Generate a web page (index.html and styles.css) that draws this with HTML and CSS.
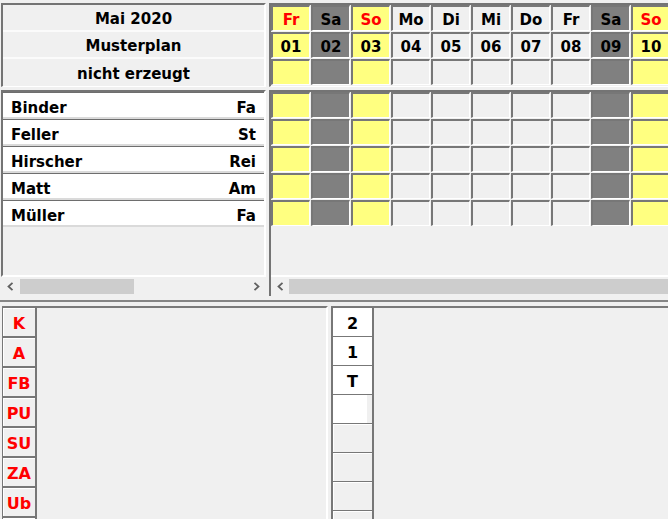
FILE: index.html
```html
<!DOCTYPE html>
<html lang="de">
<head>
<meta charset="utf-8">
<title>Dienstplan Mai 2020</title>
<link rel="stylesheet" href="styles.css">
</head>
<body>
<div class="top">
  <div class="col-left">
    <div class="hdr-left">
      <div class="hl-row">Mai 2020</div>
      <div class="hl-row">Musterplan</div>
      <div class="hl-row">nicht erzeugt</div>
    </div>
    <div class="names">
      <div class="names-client">
        <div class="name-row"><span>Binder</span><span>Fa</span></div>
        <div class="name-row"><span>Feller</span><span>St</span></div>
        <div class="name-row"><span>Hirscher</span><span>Rei</span></div>
        <div class="name-row"><span>Matt</span><span>Am</span></div>
        <div class="name-row"><span>Müller</span><span>Fa</span></div>
      </div>
      <div class="hscroll hs-left">
        <svg class="arr" width="7" height="9" viewBox="0 0 7 9"><polyline points="5.5,0.8 1.5,4.5 5.5,8.2"/></svg>
        <div class="thumb thumb-left"></div>
        <div class="fill"></div>
        <svg class="arr" width="7" height="9" viewBox="0 0 7 9"><polyline points="1.5,0.8 5.5,4.5 1.5,8.2"/></svg>
      </div>
    </div>
  </div>
  <div class="col-right">
    <div class="hdr-right">
      <div class="grid">
        <div class="cell y red">Fr</div><div class="cell g">Sa</div><div class="cell y red">So</div><div class="cell">Mo</div><div class="cell">Di</div><div class="cell">Mi</div><div class="cell">Do</div><div class="cell">Fr</div><div class="cell g">Sa</div><div class="cell y red">So</div>
        <div class="cell y">01</div><div class="cell g">02</div><div class="cell y">03</div><div class="cell">04</div><div class="cell">05</div><div class="cell">06</div><div class="cell">07</div><div class="cell">08</div><div class="cell g">09</div><div class="cell y">10</div>
        <div class="cell y"></div><div class="cell g"></div><div class="cell y"></div><div class="cell"></div><div class="cell"></div><div class="cell"></div><div class="cell"></div><div class="cell"></div><div class="cell g"></div><div class="cell y"></div>
      </div>
    </div>
    <div class="body-right">
      <div class="br-client">
        <div class="grid">
          <div class="cell y"></div><div class="cell g"></div><div class="cell y"></div><div class="cell"></div><div class="cell"></div><div class="cell"></div><div class="cell"></div><div class="cell"></div><div class="cell g"></div><div class="cell y"></div>
          <div class="cell y"></div><div class="cell g"></div><div class="cell y"></div><div class="cell"></div><div class="cell"></div><div class="cell"></div><div class="cell"></div><div class="cell"></div><div class="cell g"></div><div class="cell y"></div>
          <div class="cell y"></div><div class="cell g"></div><div class="cell y"></div><div class="cell"></div><div class="cell"></div><div class="cell"></div><div class="cell"></div><div class="cell"></div><div class="cell g"></div><div class="cell y"></div>
          <div class="cell y"></div><div class="cell g"></div><div class="cell y"></div><div class="cell"></div><div class="cell"></div><div class="cell"></div><div class="cell"></div><div class="cell"></div><div class="cell g"></div><div class="cell y"></div>
          <div class="cell y"></div><div class="cell g"></div><div class="cell y"></div><div class="cell"></div><div class="cell"></div><div class="cell"></div><div class="cell"></div><div class="cell"></div><div class="cell g"></div><div class="cell y"></div>
        </div>
      </div>
      <div class="hscroll hs-right">
        <svg class="arr" width="7" height="9" viewBox="0 0 7 9"><polyline points="5.5,0.8 1.5,4.5 5.5,8.2"/></svg>
        <div class="thumb thumb-right"></div>
      </div>
    </div>
  </div>
</div>
<div class="split"></div>
<div class="bottom">
  <div class="bl">
    <div class="btns">
      <div class="btn">K</div>
      <div class="btn">A</div>
      <div class="btn">FB</div>
      <div class="btn">PU</div>
      <div class="btn">SU</div>
      <div class="btn">ZA</div>
      <div class="btn">Ub</div>
      <div class="btn"></div>
    </div>
  </div>
  <div class="bm">
    <div class="mcell">2</div>
    <div class="mcell">1</div>
    <div class="mcell">T</div>
    <div class="mcell edit"></div>
    <div class="mcell off"></div>
    <div class="mcell off"></div>
    <div class="mcell off"></div>
    <div class="mcell off"></div>
  </div>
  <div class="br"></div>
</div>
</body>
</html>
```
FILE: styles.css
```css
html, body {
  margin: 0;
  padding: 0;
}
body {
  width: 668px;
  height: 519px;
  overflow: hidden;
  background: #f0f0f0;
  font-family: "DejaVu Sans", "Liberation Sans", sans-serif;
  font-weight: bold;
  font-size: 15px;
  color: #000;
}
.top {
  display: flex;
  height: 300px;
}
.col-left {
  width: 266px;
  padding-left: 1px;
  padding-top: 3px;
  box-sizing: border-box;
  display: flex;
  flex-direction: column;
}
.hdr-left {
  width: 265px;
  height: 84px;
  box-sizing: border-box;
  border-style: solid;
  border-width: 2px 2px 1px 2px;
  border-color: #747474 #ffffff #ffffff #747474;
  display: flex;
  flex-direction: column;
}
.hl-row {
  height: 27px;
  box-sizing: border-box;
  padding-top: 2px;
  display: flex;
  align-items: center;
  justify-content: center;
  border-bottom: 2px solid #fbfbfb;
}
.hl-row:last-child {
  border-bottom: none;
}
.names {
  margin-top: 3px;
  width: 265px;
  display: flex;
  flex-direction: column;
}
.names-client {
  height: 187px;
  box-sizing: border-box;
  border-style: solid;
  border-width: 2px;
  border-color: #747474 #ffffff #ffffff #747474;
  overflow: hidden;
}
.name-row {
  height: 27px;
  box-sizing: border-box;
  background: #ffffff;
  border-top: 1px solid #6e6e6e;
  border-bottom: 2px solid #dadada;
  display: flex;
  justify-content: space-between;
  align-items: center;
  padding: 5px 8px 0 8px;
}
.hscroll {
  height: 19px;
  display: flex;
  align-items: center;
  box-sizing: border-box;
}
.hs-left {
  padding: 0 6px 0 6px;
}
.hs-right {
  padding-left: 6px;
}
.arr {
  flex: none;
}
.arr polyline {
  fill: none;
  stroke: #606060;
  stroke-width: 1.8;
}
.thumb {
  height: 15px;
  background: #cdcdcd;
}
.thumb-left {
  width: 114px;
  margin-left: 6px;
}
.thumb-right {
  flex: 1;
  margin-left: 5px;
}
.fill {
  flex: 1;
}
.col-right {
  flex: 1;
  padding-left: 3px;
  min-width: 0;
  display: flex;
  flex-direction: column;
}
.hdr-right {
  margin-top: 3px;
  height: 84px;
  box-sizing: border-box;
  border-style: solid;
  border-width: 2px 0 1px 2px;
  border-color: #747474 #ffffff #ffffff #747474;
  overflow: hidden;
}
.grid {
  display: grid;
  grid-template-columns: repeat(10, 39px);
  grid-auto-rows: 26px;
  gap: 1px;
}
.cell {
  box-sizing: border-box;
  border-style: solid;
  border-width: 2px 1px 1px 2px;
  border-color: #777777 #ffffff #ffffff #777777;
  background: #f0f0f0;
  padding-top: 2px;
  display: flex;
  align-items: center;
  justify-content: center;
}
.cell.y {
  background: #ffff80;
}
.cell.g {
  background: #808080;
}
.cell.red {
  color: #ff0000;
}
.body-right {
  margin-top: 3px;
  border-top: 2px solid #747474;
  border-left: 2px solid #747474;
  display: flex;
  flex-direction: column;
}
.br-client {
  height: 185px;
  box-sizing: border-box;
  border-bottom: 2px solid #ffffff;
  overflow: hidden;
}
.split {
  height: 2px;
  background: #858585;
}
.bottom {
  margin-top: 4px;
  display: flex;
  height: 213px;
}
.bl {
  margin-left: 2px;
  width: 326px;
  box-sizing: border-box;
  border-top: 2px solid #7a7a7a;
  border-right: 2px solid #ffffff;
}
.btns {
  width: 35px;
  margin-top: -1px;
}
.btn {
  height: 30px;
  box-sizing: border-box;
  border: 1px solid #777777;
  border-right-width: 2px;
  box-shadow: inset 1px 1px #ffffff;
  background: #f0f0f0;
  color: #ff0000;
  font-size: 16px;
  padding-top: 3px;
  display: flex;
  align-items: center;
  justify-content: center;
}
.bm {
  margin-left: 3px;
  width: 43px;
  border-top: 2px solid #7a7a7a;
}
.mcell {
  height: 30px;
  margin-top: -1px;
  box-sizing: border-box;
  border: 1px solid #777777;
  border-left-width: 2px;
  border-right-width: 2px;
  background: #ffffff;
  font-size: 16px;
  padding-top: 3px;
  display: flex;
  align-items: center;
  justify-content: center;
}
.mcell.edit {
  background: linear-gradient(to left, #f0f0f0 5px, #ffffff 5px);
}
.mcell.off {
  background: #f0f0f0;
  box-shadow: inset 1px 1px #ffffff;
}
.br {
  flex: 1;
  border-top: 2px solid #7a7a7a;
}
```
